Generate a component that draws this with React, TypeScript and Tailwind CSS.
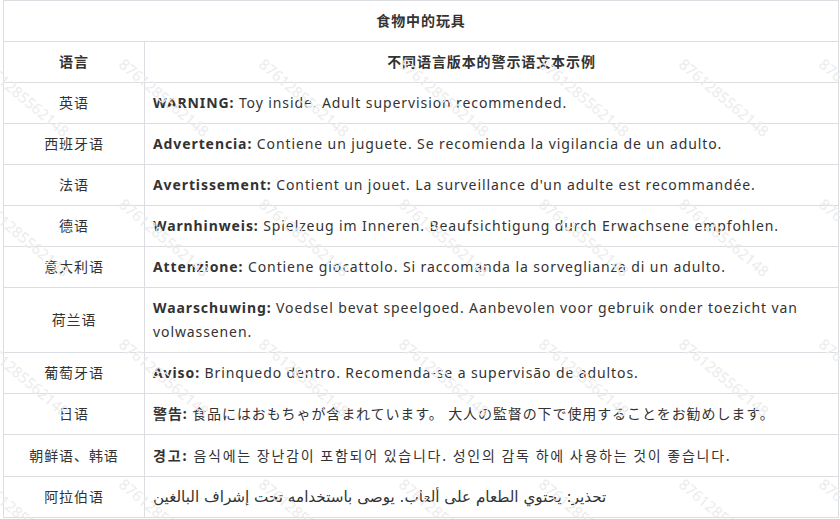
import React from "react";

const rows: { lang: string; label: string; text: string; kind?: "rtl" | "ko" }[] = [
  { lang: "英语", label: "WARNING:", text: " Toy inside. Adult supervision recommended." },
  { lang: "西班牙语", label: "Advertencia:", text: " Contiene un juguete. Se recomienda la vigilancia de un adulto." },
  { lang: "法语", label: "Avertissement:", text: " Contient un jouet. La surveillance d'un adulte est recommandée." },
  { lang: "德语", label: "Warnhinweis:", text: " Spielzeug im Inneren. Beaufsichtigung durch Erwachsene empfohlen." },
  { lang: "意大利语", label: "Attenzione:", text: " Contiene giocattolo. Si raccomanda la sorveglianza di un adulto." },
  { lang: "荷兰语", label: "Waarschuwing:", text: " Voedsel bevat speelgoed. Aanbevolen voor gebruik onder toezicht van volwassenen." },
  { lang: "葡萄牙语", label: "Aviso:", text: " Brinquedo dentro. Recomenda-se a supervisão de adultos." },
  { lang: "日语", label: "警告:", text: " 食品にはおもちゃが含まれています。 大人の監督の下で使用することをお勧めします。" },
  { lang: "朝鲜语、韩语", label: "경고:", text: " 음식에는 장난감이 포함되어 있습니다. 성인의 감독 하에 사용하는 것이 좋습니다.", kind: "ko" },
  { lang: "阿拉伯语", label: "", text: "تحذير: يحتوي الطعام على ألعاب. يوصى باستخدامه تحت إشراف البالغين", kind: "rtl" },
];

const marks: { x: number; y: number }[] = [];
for (let r = -1; r < 4; r++) {
  for (let c = -1; c < 7; c++) {
    marks.push({ x: 126 + c * 140, y: 56 + r * 140 });
  }
}

export default function App() {
  return (
    <div className="relative w-[840px] h-[519px] bg-white overflow-hidden font-['Noto_Sans','Noto_Sans_CJK_SC',sans-serif] text-[14px] tracking-[0.9px] text-[#333333]">
      <table className="ml-[3px] w-[836px] border-collapse table-fixed">
        <colgroup>
          <col className="w-[141px]" />
          <col />
        </colgroup>
        <tbody>
          <tr>
            <td colSpan={2} className="border border-[#dcdde3] py-2 leading-6 text-center font-bold">
              食物中的玩具
            </td>
          </tr>
          <tr>
            <td className="border border-[#dcdde3] py-2 leading-6 text-center font-bold">语言</td>
            <td className="border border-[#dcdde3] py-2 leading-6 text-center font-bold">不同语言版本的警示语文本示例</td>
          </tr>
          {rows.map((r) => (
            <tr key={r.lang}>
              <td className="border border-[#dcdde3] py-2 leading-6 text-center">{r.lang}</td>
              <td className="border border-[#dcdde3] py-2 pl-[8px] pr-2 leading-6">
                {r.kind === "rtl" ? (
                  <span dir="rtl" className="font-['DejaVu_Sans',sans-serif] text-[15.2px] tracking-normal">{r.text}</span>
                ) : r.kind === "ko" ? (
                  <span className="font-['Noto_Sans_CJK_KR',sans-serif] tracking-[1.75px]">
                    <span className="font-bold">{r.label}</span>
                    {r.text}
                  </span>
                ) : (
                  <>
                    <span className="font-bold">{r.label}</span>
                    {r.text}
                  </>
                )}
              </td>
            </tr>
          ))}
        </tbody>
      </table>
      <div className="pointer-events-none absolute inset-0 overflow-hidden">
        {marks.map((m, i) => (
          <span
            key={i}
            className="absolute origin-top-left rotate-[40deg] whitespace-nowrap text-[15px] leading-none tracking-normal text-[#ececec] font-['Noto_Sans',sans-serif]"
            style={{ left: m.x, top: m.y }}
          >
            8761285562148
          </span>
        ))}
      </div>
    </div>
  );
}
